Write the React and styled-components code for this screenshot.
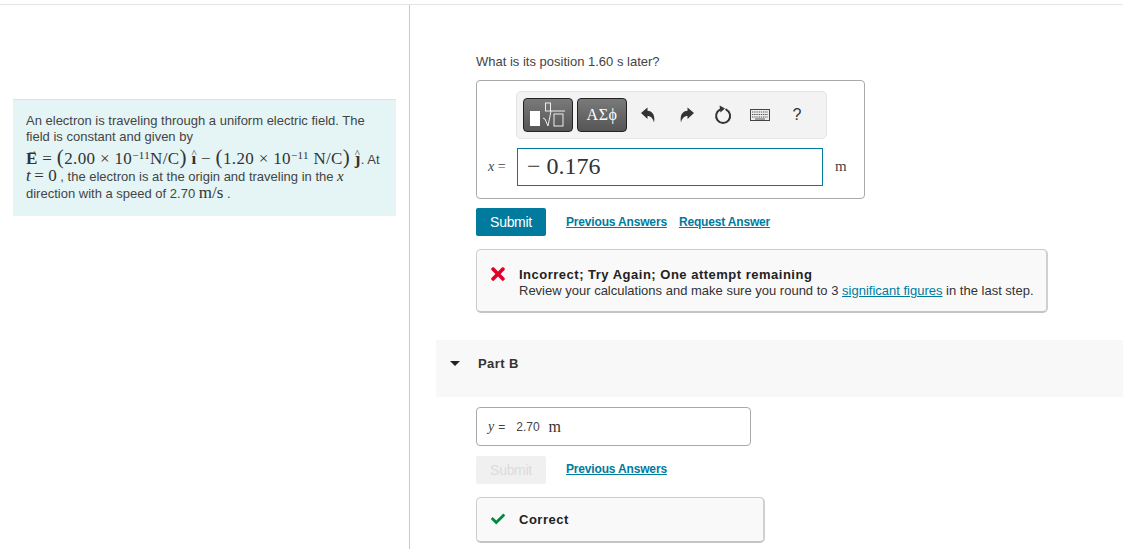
import React from "react";
import styled, { createGlobalStyle } from "styled-components";
import { FaTimes, FaCheck } from "react-icons/fa";

const GlobalStyle = createGlobalStyle`
  html, body {
    margin: 0;
    padding: 0;
    background: #fff;
    overflow: hidden;
  }
  body {
    font-family: "Liberation Sans", Arial, sans-serif;
    color: #333;
  }
`;

const Page = styled.div`
  width: 1123px;
  height: 545px;
  box-sizing: border-box;
  margin-top: 4px;
  border-top: 1px solid #e4e4e4;
  display: grid;
  grid-template-columns: 410px 1fr;
  overflow: hidden;
`;

const LeftColumn = styled.aside`
  border-right: 1px solid #c9c9c9;
  padding: 94px 13px 0 13px;
`;

const Intro = styled.div`
  height: 117px;
  box-sizing: border-box;
  background: #e5f5f6;
  border-top: 1px solid #d8e4e4;
  padding: 13px 13px 0 13px;
  font-size: 13px;
  line-height: 16px;
  color: #444;
`;

const MathLine = styled.div`
  height: ${(p) => p.$h || 16}px;
  line-height: ${(p) => p.$h || 16}px;
  margin-top: ${(p) => p.$top || 0}px;
  white-space: nowrap;
`;

const Math = styled.span`
  font-family: "Liberation Serif", "DejaVu Serif", serif;
  font-size: ${(p) => p.$size || 17}px;
  font-style: ${(p) => (p.$italic ? "italic" : "normal")};
  letter-spacing: ${(p) => p.$spacing || 0}px;
  color: #333;
`;

const Sup = styled.sup`
  font-size: 11px;
  line-height: 0;
  vertical-align: 5px;
`;

const VectorLetter = styled.span`
  position: relative;
  display: inline-block;
  font-weight: 700;
  &::before {
    content: "${(p) => p.$mark}";
    position: absolute;
    left: ${(p) => p.$left || 0}px;
    top: ${(p) => p.$top || -6}px;
    font-size: 11px;
    font-weight: 400;
  }
`;

const Bracket = styled.span`
  font-size: 21px;
  line-height: 0;
  font-weight: 400;
`;

const RightColumn = styled.main`
  display: flex;
  flex-direction: column;
  padding-top: 47px;
  font-size: 13px;
`;

const Section = styled.section`
  padding-left: 66px;
`;

const Question = styled.div`
  height: 28px;
  line-height: 20px;
  font-size: 13px;
  color: #444;
`;

const AnswerBox = styled.div`
  width: 389px;
  height: 119px;
  box-sizing: border-box;
  border: 1px solid #aaa;
  border-radius: 4px;
  padding: 10px 0 0 39px;
`;

const Toolbar = styled.div`
  width: 311px;
  height: 48px;
  box-sizing: border-box;
  background: #f3f3f3;
  border: 1px solid #e4e4e4;
  border-radius: 5px;
  padding: 6px 0 0 6px;
  display: flex;
  align-items: flex-start;
`;

const TemplateButton = styled.div`
  width: 50px;
  height: 34px;
  box-sizing: border-box;
  margin-right: 4px;
  border: 1px solid #222;
  border-radius: 4px;
  background: linear-gradient(#7a7a7a, #555);
  color: #fff;
  display: flex;
  align-items: center;
  justify-content: center;
  font-family: "Liberation Serif", serif;
  font-size: 16px;
  letter-spacing: 0.5px;
`;

const ToolIcon = styled.div`
  width: ${(p) => p.$w}px;
  height: 34px;
  display: flex;
  align-items: center;
  justify-content: center;
  color: #333;
  font-size: 16px;
`;

const InputRow = styled.div`
  display: flex;
  align-items: center;
  margin: 9px 0 0 -28px;
`;

const VarLabel = styled.span`
  width: 29px;
  font-family: "Liberation Serif", serif;
  font-size: 14px;
  color: #444;
  white-space: nowrap;
`;

const Field = styled.div`
  width: 306px;
  height: 38px;
  box-sizing: border-box;
  border: 1px solid #007b9e;
  padding: 0 0 2px 9px;
  display: flex;
  align-items: center;
  font-family: "Liberation Serif", serif;
  font-size: 24px;
  color: #333;
`;

const Unit = styled.span`
  margin: 0 0 2px 12px;
  font-family: "Liberation Serif", serif;
  font-size: 15px;
  color: #444;
`;

const ActionRow = styled.div`
  display: flex;
  align-items: center;
  margin-top: ${(p) => p.$top}px;
`;

const SubmitButton = styled.div`
  width: 70px;
  height: 28px;
  border-radius: 2px;
  display: flex;
  align-items: center;
  justify-content: center;
  font-size: 14px;
  letter-spacing: -0.3px;
  background: ${(p) => (p.$disabled ? "#f0f0f0" : "#007b9e")};
  color: ${(p) => (p.$disabled ? "#dcdcdc" : "#fff")};
`;

const ActionLink = styled.a`
  margin-left: ${(p) => p.$left}px;
  margin-bottom: ${(p) => p.$lift || 0}px;
  font-size: 12px;
  font-weight: 700;
  letter-spacing: -0.17px;
  color: #007b9e;
  text-decoration: underline;
`;

const Feedback = styled.div`
  width: ${(p) => p.$w}px;
  height: ${(p) => p.$h}px;
  margin-top: 13px;
  box-sizing: border-box;
  background: #f9f9f9;
  border: 1px solid #ccc;
  border-bottom: 2px solid #c4c4c4;
  border-right: 2px solid #d0d0d0;
  border-radius: 5px;
  padding: ${(p) => p.$pad}px 0 0 14px;
  display: flex;
  align-items: flex-start;
`;

const FeedbackIcon = styled.span`
  width: 28px;
  height: 14px;
  flex: none;
  display: flex;
  align-items: center;
  margin-left: ${(p) => p.$shift || 0}px;
  margin-right: ${(p) => -(p.$shift || 0)}px;
  font-size: ${(p) => p.$size}px;
  color: ${(p) => p.$color};
`;

const FeedbackBody = styled.div`
  font-size: 13px;
  line-height: 16px;
  color: #333;
`;

const FeedbackTitle = styled.div`
  font-weight: 700;
  font-size: 13px;
  line-height: 16px;
  color: #222;
  letter-spacing: 0.5px;
`;

const InlineLink = styled.a`
  color: #007b9e;
  text-decoration: underline;
`;

const PartHeader = styled.div`
  margin: 27px 0 0 26px;
  height: 57px;
  box-sizing: border-box;
  background: #f8f8f8;
  display: flex;
  align-items: flex-start;
  padding: 15px 0 0 14px;
`;

const Caret = styled.span`
  width: 0;
  height: 0;
  margin: 6px 18px 0 0;
  border-left: 5.5px solid transparent;
  border-right: 5.5px solid transparent;
  border-top: 5px solid #222;
`;

const PartTitle = styled.span`
  font-size: 13px;
  line-height: 18px;
  font-weight: 700;
  letter-spacing: 0.4px;
  color: #333;
`;

const ResultBox = styled.div`
  width: 275px;
  height: 39px;
  margin-top: 10px;
  box-sizing: border-box;
  border: 1px solid #aaa;
  border-radius: 4px;
  padding-left: 11px;
  display: flex;
  align-items: center;
  font-size: 12px;
  color: #444;
`;

const ResultValue = styled.span`
  margin: 0 9px 0 11px;
`;

const VarName = styled.span`
  font-family: "Liberation Serif", serif;
  font-style: italic;
  font-size: 14px;
  margin-right: 4px;
`;

const ArrowSvg = styled.svg`
  transform: ${(p) => (p.$flip ? "scaleX(-1)" : "none")};
`;

const UndoIcon = ({ flip }) => (
  <ArrowSvg width="14" height="16" viewBox="0 0 14 16" $flip={flip}>
    <path d="M0 6 L6.5 0.5 V3.8 C11 3.8 14.5 8 13 15.5 C12 11.5 10 9 6.5 9 V12 Z" fill="#333" />
  </ArrowSvg>
);

const RefreshIcon = () => (
  <svg width="18" height="20" viewBox="0 0 18 20" fill="none">
    <path d="M6 4.6a7 7 0 1 0 6.2 0" stroke="#333" strokeWidth="2" strokeLinecap="round" />
    <path d="M5.6 0.6 L11 3.4 L6.4 7.4 Z" fill="#333" />
  </svg>
);

const KeyboardIcon = () => (
  <svg width="20" height="12" viewBox="0 0 20 12">
    <rect x="0.5" y="0.5" width="19" height="11" fill="#eee" stroke="#444" />
    <path
      d="M2 3h16M2 5.5h16M2 8h16"
      stroke="#555"
      strokeWidth="1.2"
      strokeDasharray="1.4 0.8"
    />
    <path d="M5 10h10" stroke="#555" strokeWidth="1" />
  </svg>
);

const TemplatesGlyph = () => (
  <svg width="38" height="26" viewBox="0 0 38 26">
    <rect x="1" y="9" width="10" height="15" fill="#fff" />
    <rect x="16.5" y="1" width="5" height="8" fill="none" stroke="#eee" />
    <path d="M14 16l2 1 3 7 3-15h14" fill="none" stroke="#eee" />
    <rect x="25" y="12" width="9" height="12" fill="none" stroke="#eee" />
  </svg>
);

export default function App() {
  return (
    <>
      <GlobalStyle />
      <Page>
        <LeftColumn>
          <Intro>
            <MathLine>An electron is traveling through a uniform electric field. The</MathLine>
            <MathLine>field is constant and given by</MathLine>
            <MathLine $h={19} $top={4}>
              <Math $spacing={0.35}>
                <VectorLetter $mark="→" $left={1} $top={-8}>E</VectorLetter> = <Bracket>(</Bracket>2.00 × 10
                <Sup>−11</Sup>N/C<Bracket>)</Bracket>{" "}
                <VectorLetter $mark="^" $left={0} $top={-5}>ı</VectorLetter> − <Bracket>(</Bracket>1.20 × 10
                <Sup>−11</Sup> N/C<Bracket>)</Bracket>{" "}
                <VectorLetter $mark="^" $left={0} $top={-5}>ȷ</VectorLetter>
              </Math>
              . At
            </MathLine>
            <MathLine>
              <Math $italic>t</Math> <Math>= 0</Math> , the electron is at the origin and traveling in the{" "}
              <Math $italic $size={15}>x</Math>
            </MathLine>
            <MathLine $top={1}>
              direction with a speed of 2.70 <Math>m/s</Math> .
            </MathLine>
          </Intro>
        </LeftColumn>

        <RightColumn>
          <Section>
            <Question>What is its position 1.60 s later?</Question>
            <AnswerBox>
              <Toolbar>
                <TemplateButton>
                  <TemplatesGlyph />
                </TemplateButton>
                <TemplateButton>ΑΣϕ</TemplateButton>
                <ToolIcon $w={34}>
                  <UndoIcon />
                </ToolIcon>
                <ToolIcon $w={44}>
                  <UndoIcon flip />
                </ToolIcon>
                <ToolIcon $w={28}>
                  <RefreshIcon />
                </ToolIcon>
                <ToolIcon $w={46}>
                  <KeyboardIcon />
                </ToolIcon>
                <ToolIcon $w={28}>?</ToolIcon>
              </Toolbar>
              <InputRow>
                <VarLabel>
                  <i>x</i> =
                </VarLabel>
                <Field>− 0.176</Field>
                <Unit>m</Unit>
              </InputRow>
            </AnswerBox>
            <ActionRow $top={9}>
              <SubmitButton>Submit</SubmitButton>
              <ActionLink $left={20}>Previous Answers</ActionLink>
              <ActionLink $left={12}>Request Answer</ActionLink>
            </ActionRow>
            <Feedback $w={572} $h={64} $pad={17}>
              <FeedbackIcon $color="#e0002a" $size={20} $shift={-3}>
                <FaTimes />
              </FeedbackIcon>
              <FeedbackBody>
                <FeedbackTitle>Incorrect; Try Again; One attempt remaining</FeedbackTitle>
                Review your calculations and make sure you round to 3{" "}
                <InlineLink>significant figures</InlineLink> in the last step.
              </FeedbackBody>
            </Feedback>
          </Section>

          <PartHeader>
            <Caret />
            <PartTitle>Part B</PartTitle>
          </PartHeader>

          <Section>
            <ResultBox>
              <VarName>y</VarName>=
              <ResultValue>2.70</ResultValue>
              <Math $size={16}>m</Math>
            </ResultBox>
            <ActionRow $top={10}>
              <SubmitButton $disabled>Submit</SubmitButton>
              <ActionLink $left={20} $lift={2}>Previous Answers</ActionLink>
            </ActionRow>
            <Feedback $w={289} $h={46} $pad={14}>
              <FeedbackIcon $color="#008a3e" $size={14}>
                <FaCheck />
              </FeedbackIcon>
              <FeedbackTitle>Correct</FeedbackTitle>
            </Feedback>
          </Section>
        </RightColumn>
      </Page>
    </>
  );
}
